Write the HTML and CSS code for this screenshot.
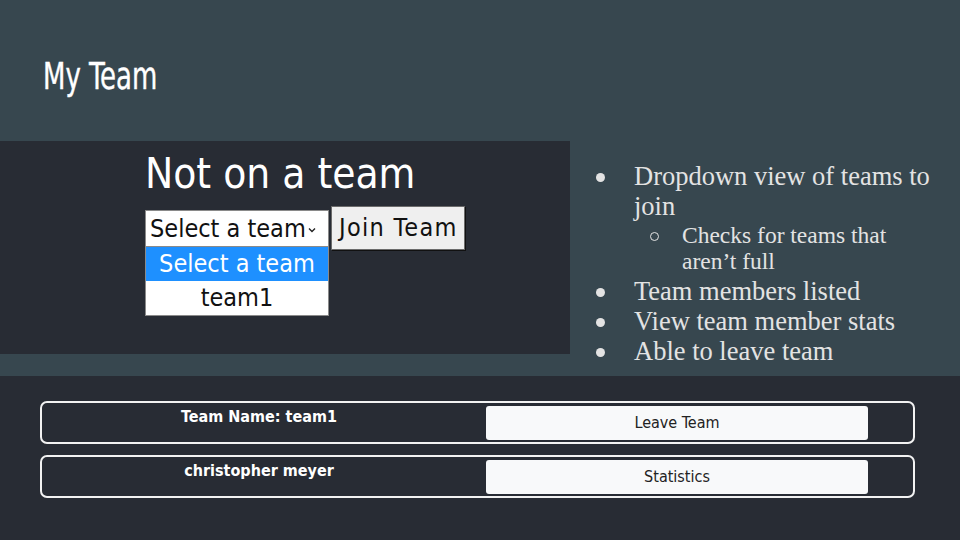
FILE: index.html
```html
<!DOCTYPE html>
<html>
<head>
<meta charset="utf-8">
<link rel="stylesheet" href="styles.css">
</head>
<body>
<div class="slide">
  <div class="top">
    <h1 class="title">My Team</h1>
    <div class="content">
      <div class="shot">
        <div class="shot-title">Not on a team</div>
        <div class="controls">
          <div class="picker">
            <div class="select">Select a team<svg class="chev" width="8" height="6" viewBox="0 0 8 6"><path d="M1 1.5 L4 4.5 L7 1.5" fill="none" stroke="#222" stroke-width="1.4"/></svg></div>
            <div class="options">
              <div class="opt active">Select a team</div>
              <div class="opt">team1</div>
            </div>
          </div>
          <div class="join">Join Team</div>
        </div>
      </div>
      <ul class="bullets">
        <li>Dropdown view of teams to join
          <ul class="sub"><li>Checks for teams that aren’t full</li></ul>
        </li>
        <li>Team members listed</li>
        <li>View team member stats</li>
        <li>Able to leave team</li>
      </ul>
    </div>
  </div>
  <div class="bottom">
    <div class="row">
      <div class="label">Team Name: team1</div>
      <div class="btn">Leave Team</div>
    </div>
    <div class="row">
      <div class="label">christopher meyer</div>
      <div class="btn">Statistics</div>
    </div>
  </div>
</div>
</body>
</html>
```
FILE: styles.css
```css
html, body {
  margin: 0;
  padding: 0;
}
body {
  width: 960px;
  height: 540px;
  overflow: hidden;
  background: #282c34;
}
.slide {
  width: 960px;
  height: 540px;
  display: flex;
  flex-direction: column;
}
.top {
  background: #37474f;
  height: 376px;
  display: flex;
  flex-direction: column;
}
.title {
  margin: 0;
  padding: 0 0 0 43px;
  height: 141px;
  box-sizing: border-box;
  font-family: "DejaVu Sans Condensed", "DejaVu Sans", sans-serif;
  font-weight: normal;
  font-size: 38px;
  line-height: 152px;
  color: #ffffff;
  transform: scaleX(0.76);
  transform-origin: 43px 0;
  -webkit-text-stroke: 0.4px #ffffff;
}
.content {
  display: flex;
}
.shot {
  width: 570px;
  height: 213px;
  flex: none;
  background: #282c34;
  box-sizing: border-box;
  padding: 8px 0 0 145px;
  font-family: "DejaVu Sans Condensed", "DejaVu Sans", sans-serif;
}
.shot-title {
  color: #ffffff;
  font-size: 42px;
  line-height: 50px;
  height: 57px;
}
.controls {
  display: flex;
  align-items: flex-start;
  gap: 2px;
}
.picker {
  width: 184px;
  margin-top: 4px;
}
.select {
  height: 37px;
  box-sizing: border-box;
  background: #ffffff;
  border: 1px solid #8a8a8a;
  display: flex;
  align-items: center;
  padding-left: 4px;
  font-size: 25px;
  color: #111;
  gap: 2px;
}
.chev {
  margin-top: 2px;
}
.options {
  border: 1px solid #8a8a8a;
  border-top: none;
  background: #ffffff;
}
.opt {
  height: 34px;
  line-height: 34px;
  text-align: center;
  font-size: 25px;
  color: #111;
}
.opt.active {
  background: #1e90ff;
  color: #ffffff;
}
.join {
  height: 44px;
  box-sizing: border-box;
  padding: 0 6px 0 7px;
  background: #efefef;
  border: 1px solid #6b6b6b;
  box-shadow: 1px 1px 0 #111;
  font-size: 25px;
  line-height: 42px;
  letter-spacing: 1.3px;
  color: #111;
}
.bullets {
  margin: 20px 0 0 0;
  padding: 0 0 0 64px;
  list-style: none;
  font-family: "Liberation Serif", serif;
  font-size: 26.5px;
  line-height: 30px;
  color: #e3e3e3;
  width: 326px;
}
.bullets > li {
  position: relative;
}
.bullets > li::before {
  content: "";
  position: absolute;
  left: -38px;
  top: 12px;
  width: 9px;
  height: 9px;
  border-radius: 50%;
  background: #e3e3e3;
}
.sub {
  list-style: none;
  margin: 0 0 2px 0;
  padding: 1px 0 0 48px;
  font-size: 23.5px;
  line-height: 26px;
  width: 230px;
}
.sub > li {
  position: relative;
}
.sub > li::before {
  content: "";
  position: absolute;
  left: -32px;
  top: 10px;
  width: 7px;
  height: 7px;
  border-radius: 50%;
  border: 1px solid #e3e3e3;
}
.bottom {
  flex: 1;
  background: #282c34;
  padding: 25px 45px 0 40px;
  display: flex;
  flex-direction: column;
  gap: 11px;
}
.row {
  height: 43px;
  box-sizing: border-box;
  border: 2px solid #f2f2f2;
  border-radius: 7px;
  display: flex;
  align-items: flex-start;
  font-family: "DejaVu Sans Condensed", "DejaVu Sans", sans-serif;
}
.label {
  width: 434px;
  text-align: center;
  color: #ffffff;
  font-weight: bold;
  font-size: 16px;
  line-height: 18px;
  padding-top: 5px;
}
.btn {
  margin-left: 10px;
  margin-top: 3px;
  width: 382px;
  height: 34px;
  box-sizing: border-box;
  background: #f8f9fa;
  border-radius: 3px;
  text-align: center;
  line-height: 34px;
  font-size: 16px;
  color: #222;
}
```
